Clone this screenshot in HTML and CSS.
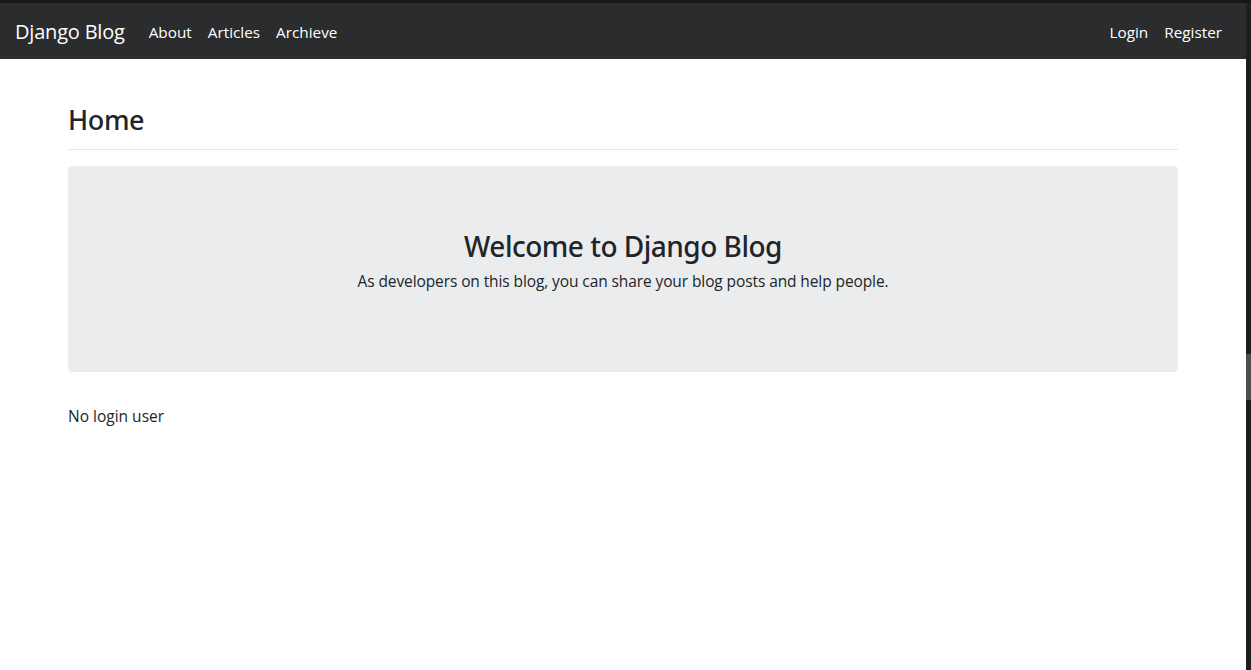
FILE: index.html
```html
<!DOCTYPE html>
<html lang="en">
<head>
<meta charset="utf-8">
<title>Django Blog</title>
<link rel="stylesheet" href="styles.css">
</head>
<body>
<div class="window">
  <div class="page">
    <nav class="navbar">
      <a class="brand" href="#">Django Blog</a>
      <ul class="nav">
        <li><a href="#">About</a></li>
        <li><a href="#">Articles</a></li>
        <li><a href="#">Archieve</a></li>
      </ul>
      <ul class="nav nav-right">
        <li><a href="#">Login</a></li>
        <li><a href="#">Register</a></li>
      </ul>
    </nav>
    <main class="container">
      <h2 class="page-title">Home</h2>
      <section class="jumbotron">
        <h2 class="jumbo-title">Welcome to Django Blog</h2>
        <p class="jumbo-text">As developers on this blog, you can share your blog posts and help people.</p>
      </section>
      <p class="status">No login user</p>
    </main>
  </div>
  <div class="scrollbar"><div class="thumb"></div></div>
</div>
</body>
</html>
```
FILE: styles.css
```css
* { box-sizing: border-box; }
html, body { margin: 0; height: 100%; }
body {
  font-family: "Open Sans", "Noto Sans", sans-serif;
  font-size: 16px;
  line-height: 1.5;
  color: #212529;
  background: #fff;
}
.window {
  display: flex;
  height: 100%;
  border-top: 3px solid #17171a;
}
.page { flex: 1; min-width: 0; }
.scrollbar {
  width: 5px;
  background: #1e1e1e;
  padding-top: 351px;
}
.thumb { height: 46px; background: #4d4d4d; }

.navbar {
  display: flex;
  align-items: center;
  height: 56px;
  padding: 9px 16px 7px 15px;
  background: #2b2c2e;
}
.navbar a { color: #fff; text-decoration: none; }
.brand { font-size: 20px; margin-right: 16px; line-height: 30px; letter-spacing: -0.2px; }
.nav { display: flex; list-style: none; margin: 0; padding: 0; }
.nav a { display: block; padding: 8px; font-size: 15.3px; }
.nav-right { margin-left: auto; }

.container {
  width: 1140px;
  margin: 0 auto;
  padding: 0 15px;
}
.page-title {
  margin: 45px 0 16px;
  padding-bottom: 13px;
  font-family: "Noto Sans", "Open Sans", sans-serif;
  font-size: 27px;
  font-weight: 500;
  line-height: 1.2;
  border-bottom: 1px solid #e5e6e8;
  letter-spacing: -0.4px;
}
.jumbotron {
  background: #ebecee;
  border-radius: 4px;
  height: 206px;
  padding: 64px 32px 0;
  text-align: center;
  margin-bottom: 33px;
}
.jumbo-title {
  margin: 0 0 6px;
  font-family: "Noto Sans", "Open Sans", sans-serif;
  font-size: 28px;
  font-weight: 500;
  line-height: 1.2;
  letter-spacing: -0.5px;
}
.jumbo-text { margin: 0; font-size: 15.5px; letter-spacing: -0.1px; }
.status { margin: 0; font-size: 15.5px; }
```
